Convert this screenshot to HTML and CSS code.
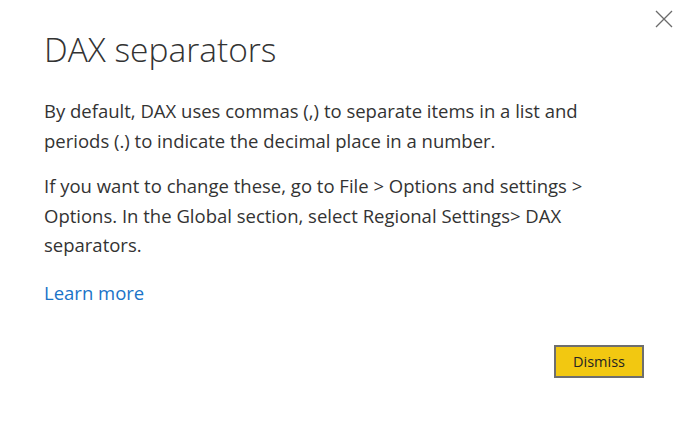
FILE: index.html
```html
<!DOCTYPE html>
<html>
<head>
<meta charset="utf-8">
<link rel="stylesheet" href="styles.css">
</head>
<body>
<div class="dialog">
  <button class="close" aria-label="Close">
    <svg width="18" height="18" viewBox="0 0 18 18"><path d="M1 1 L17 17 M17 1 L1 17" stroke="#6b6b6b" stroke-width="1.3" fill="none"/></svg>
  </button>
  <h1 class="title">DAX separators</h1>
  <p class="text">By default, DAX uses commas (,) to separate items in a list and periods (.) to indicate the decimal place in a number.</p>
  <p class="text">If you want to change these, go to File &gt; Options and settings &gt; Options. In the Global section, select Regional Settings&gt; DAX separators.</p>
  <a class="link" href="#">Learn more</a>
  <div class="actions">
    <button class="dismiss">Dismiss</button>
  </div>
</div>
</body>
</html>
```
FILE: styles.css
```css
html, body {
  margin: 0;
  padding: 0;
  background: #ffffff;
}
.dialog {
  position: relative;
  width: 689px;
  height: 422px;
  box-sizing: border-box;
  padding: 24px 44px 0 44px;
  font-family: "Open Sans", "Noto Sans", sans-serif;
  color: #333333;
}
.close {
  position: absolute;
  top: 10px;
  right: 16px;
  border: 0;
  background: none;
  padding: 0;
  width: 18px;
  height: 18px;
}
.title {
  margin: 0 0 22px 0;
  font-size: 33.5px;
  font-weight: 300;
  line-height: 50px;
  color: #333;
}
.text {
  margin: 0 0 16px 0;
  font-size: 18.5px;
  line-height: 29.5px;
  width: 580px;
}
.link {
  display: inline-block;
  margin-top: 2px;
  font-size: 18.5px;
  line-height: 29px;
  color: #1a73c8;
  text-decoration: none;
}
.actions {
  display: flex;
  justify-content: flex-end;
  margin-top: 38px;
  margin-right: 1px;
}
.dismiss {
  width: 90px;
  height: 33px;
  background: #f2c811;
  border: 2px solid #6e6e6e;
  font-family: "Open Sans", "Noto Sans", sans-serif;
  font-size: 14.5px;
  color: #252423;
  padding: 0;
}
```
